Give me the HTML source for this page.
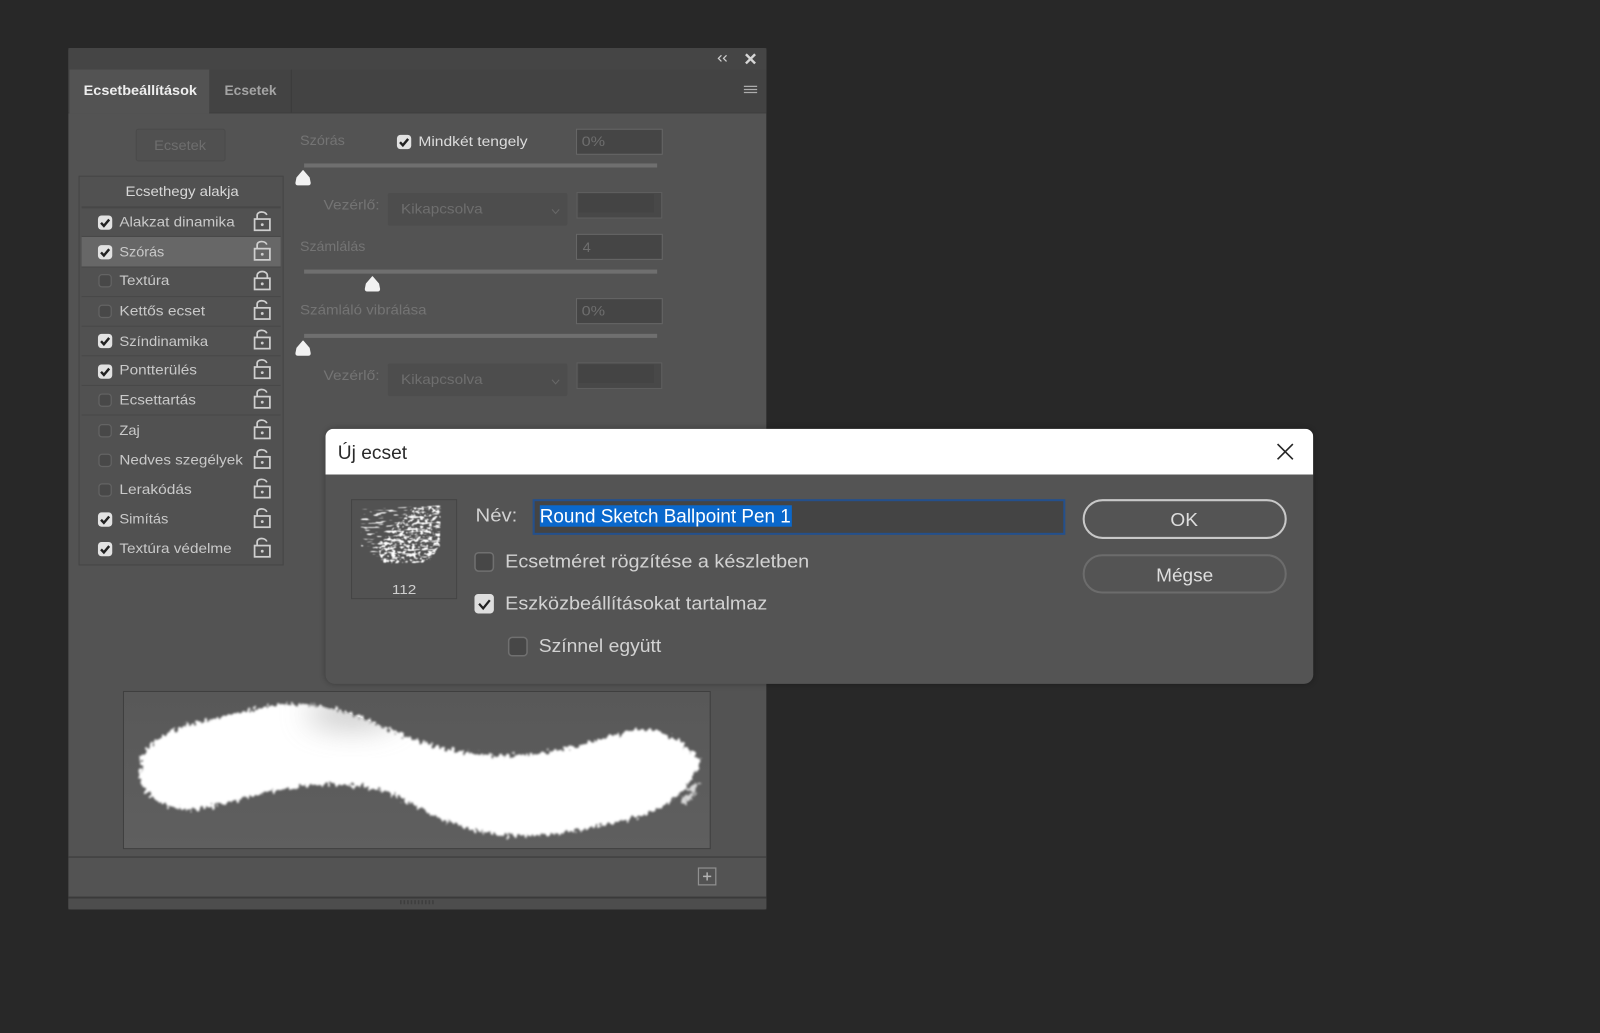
<!DOCTYPE html>
<html lang="hu"><head><meta charset="utf-8"><title>Új ecset</title>
<style>
html,body{margin:0;padding:0;background:#282828;width:1600px;height:1033px;overflow:hidden}
svg{display:block;position:absolute;left:0;top:0;filter:blur(0.35px)}
text{font-family:"Liberation Sans",sans-serif;white-space:pre}
.l{font-size:14px;fill:#c9c9c9}
.d{font-size:14px;fill:#747474}
.f{font-size:14px;fill:#6e6e6e}
.t{font-size:18px;fill:#d2d2d2}
</style></head><body>
<svg width="1600" height="1033" viewBox="0 0 1568 1012" xmlns="http://www.w3.org/2000/svg">
<defs>
<g id="on"><rect x="-7" y="-7" width="14" height="14" rx="3.5" fill="#e2e2e2"/><path d="M-4 0.2 L-1.2 3.2 L4 -3" fill="none" stroke="#222" stroke-width="2.4"/></g>
<g id="off"><rect x="-6" y="-6" width="12" height="12" rx="3" fill="#484848" stroke="#646464" stroke-width="1.2"/></g>
<g id="lock" fill="none" stroke="#cfcfcf" stroke-width="1.7"><rect x="-7.5" y="-2.5" width="15" height="11"/><path d="M-5 -2.5 V-6 C-5 -10.5 3 -10.5 4.5 -6.5"/><circle cx="0" cy="3" r="1.4" fill="#cfcfcf" stroke="none"/></g>
<g id="lockc" fill="none" stroke="#cfcfcf" stroke-width="1.7"><rect x="-7.5" y="-2.5" width="15" height="11"/><path d="M-5 -2.5 V-5 C-5 -10.5 5 -10.5 5 -5 V-2.5"/><circle cx="0" cy="3" r="1.4" fill="#cfcfcf" stroke="none"/></g>
<path id="thumb" d="M0 -7 L6 0 L7 5 Q7 7 5 7 H-5 Q-7 7 -7 5 L-6 0 Z" fill="#f2f2f2" stroke="#f2f2f2" stroke-width="1" stroke-linejoin="round"/>
<path id="strokeShape" d="M138 742 C150 722 172 712 200 706 C235 698 262 689 298 690 C335 691 372 712 410 726 C445 738 480 742 520 739 C560 735 585 725 615 717 C640 710 662 720 686 744 C680 772 655 792 625 800 C585 812 530 822 490 818 C450 813 420 798 395 783 C370 771 345 768 310 769 C270 771 230 786 195 793 C165 795 145 784 138 766 Z"/>
<filter id="rough" x="100" y="660" width="620" height="190" filterUnits="userSpaceOnUse" color-interpolation-filters="sRGB">
<feTurbulence type="fractalNoise" baseFrequency="0.28 0.2" numOctaves="2" seed="7"/>
<feDisplacementMap in="SourceGraphic" scale="11" xChannelSelector="R" yChannelSelector="G"/>
<feGaussianBlur stdDeviation="1"/>
</filter>
<filter id="sp1" x="345" y="490" width="95" height="70" filterUnits="userSpaceOnUse" color-interpolation-filters="sRGB">
<feTurbulence type="fractalNoise" baseFrequency="0.09 0.5" numOctaves="2" seed="11"/>
<feColorMatrix values="0 0 0 0 1 0 0 0 0 1 0 0 0 0 1 10 0 0 0 -5.9"/>
<feComposite in2="SourceGraphic" operator="in"/>
<feGaussianBlur stdDeviation="0.45"/>
</filter>
<filter id="sp2" x="345" y="490" width="95" height="70" filterUnits="userSpaceOnUse" color-interpolation-filters="sRGB">
<feTurbulence type="fractalNoise" baseFrequency="0.25 0.35" numOctaves="2" seed="4"/>
<feColorMatrix values="0 0 0 0 1 0 0 0 0 1 0 0 0 0 1 10 0 0 0 -5.1"/>
<feComposite in2="SourceGraphic" operator="in"/>
<feGaussianBlur stdDeviation="0.4"/>
</filter>
<filter id="bl" x="-50%" y="-100%" width="200%" height="300%"><feGaussianBlur stdDeviation="14"/></filter>
<filter id="sh" x="280" y="390" width="1050" height="320" filterUnits="userSpaceOnUse"><feGaussianBlur stdDeviation="3"/></filter>
<clipPath id="tb"><path d="M319 465 V428 a8 8 0 0 1 8 -8 H1279 a8 8 0 0 1 8 8 V465 Z"/></clipPath>
<clipPath id="sc"><path d="M150 720 C200 700 260 686 298 690 C335 691 372 712 410 726 L440 760 L250 760 Z"/></clipPath>
<linearGradient id="pv" x1="0" y1="0" x2="0" y2="1"><stop offset="0" stop-color="#585858"/><stop offset="1" stop-color="#5f5f5f"/></linearGradient>
</defs>

<rect width="1568" height="1012" fill="#282828"/>

<!-- panel -->
<rect x="67" y="47" width="684" height="844" rx="2" fill="#535353"/>
<rect x="67" y="47" width="684" height="21" fill="#454545"/>
<rect x="67" y="68" width="684" height="42" fill="#434343"/>
<rect x="67" y="110" width="684" height="1" fill="#3d3d3d"/>
<rect x="68" y="68" width="137" height="43" fill="#535353"/>
<rect x="285" y="68" width="1" height="42" fill="#3b3b3b"/>
<text x="82" y="93" font-size="14" font-weight="bold" fill="#eeeeee" textLength="111" lengthAdjust="spacingAndGlyphs">Ecsetbeállítások</text>
<text x="220" y="93" font-size="14" font-weight="bold" fill="#a4a4a4" textLength="51" lengthAdjust="spacingAndGlyphs">Ecsetek</text>
<path d="M707 54 L704 57 L707 60 M712 54 L709 57 L712 60" fill="none" stroke="#cfcfcf" stroke-width="1.2"/>
<path d="M731 53 L740 62 M740 53 L731 62" fill="none" stroke="#d6d6d6" stroke-width="2.4"/>
<path d="M729 84.500 H742 M729 87.500 H742 M729 90.500 H742" fill="none" stroke="#adadad" stroke-width="1.200"/>

<!-- brushes button -->
<rect x="133.500" y="126.500" width="87" height="31" rx="2" fill="#505050" stroke="#4a4a4a"/>
<text x="151" y="147" class="f" textLength="51" lengthAdjust="spacingAndGlyphs">Ecsetek</text>

<!-- right controls -->
<text x="294" y="142" class="d" textLength="44" lengthAdjust="spacingAndGlyphs">Szórás</text>
<use href="#on" x="396" y="139"/>
<text x="410" y="143" font-size="14" fill="#dcdcdc" textLength="107" lengthAdjust="spacingAndGlyphs">Mindkét tengely</text>
<rect x="565" y="126.500" width="84" height="24.500" fill="#454545" stroke="#666"/>
<text x="570" y="143" class="f" textLength="23" lengthAdjust="spacingAndGlyphs">0%</text>
<rect x="298" y="160" width="346" height="4" fill="#6f6f6f"/>
<use href="#thumb" x="297" y="174"/>
<text x="317" y="205" class="d" textLength="55" lengthAdjust="spacingAndGlyphs">Vezérlő:</text>
<rect x="380" y="189" width="176" height="32" rx="2" fill="#4d4d4d"/>
<text x="393" y="209" class="f" textLength="80" lengthAdjust="spacingAndGlyphs">Kikapcsolva</text>
<path d="M541 205 L544.500 209 L548 205" fill="none" stroke="#686868" stroke-width="1"/>
<rect x="565.500" y="188.500" width="83" height="25" fill="#484848" stroke="#5f5f5f"/>
<rect x="567" y="190" width="74" height="18" fill="#444444"/>

<text x="294" y="246" class="d" textLength="64" lengthAdjust="spacingAndGlyphs">Számlálás</text>
<rect x="565" y="229.500" width="84" height="24.500" fill="#454545" stroke="#666"/>
<text x="571" y="247" class="f" textLength="8" lengthAdjust="spacingAndGlyphs">4</text>
<rect x="298" y="264" width="346" height="4" fill="#6f6f6f"/>
<use href="#thumb" x="365" y="278"/>

<text x="294" y="308" class="d" textLength="124" lengthAdjust="spacingAndGlyphs">Számláló vibrálása</text>
<rect x="565" y="292.500" width="84" height="24.500" fill="#454545" stroke="#666"/>
<text x="570" y="309" class="f" textLength="23" lengthAdjust="spacingAndGlyphs">0%</text>
<rect x="298" y="327" width="346" height="4" fill="#6f6f6f"/>
<use href="#thumb" x="297" y="341"/>
<text x="317" y="372" class="d" textLength="55" lengthAdjust="spacingAndGlyphs">Vezérlő:</text>
<rect x="380" y="356" width="176" height="32" rx="2" fill="#4d4d4d"/>
<text x="393" y="376" class="f" textLength="80" lengthAdjust="spacingAndGlyphs">Kikapcsolva</text>
<path d="M541 372 L544.500 376 L548 372" fill="none" stroke="#686868" stroke-width="1"/>
<rect x="565.500" y="355.500" width="83" height="25" fill="#484848" stroke="#5f5f5f"/>
<rect x="567" y="357" width="74" height="18" fill="#444444"/>

<!-- list -->
<rect x="77.500" y="172.500" width="200" height="381" fill="#515151" stroke="#454545"/>
<rect x="80" y="232" width="195" height="29" fill="#676767"/>
<g fill="#474747">
<rect x="80" y="202" width="195" height="2"/>
<rect x="80" y="231" width="195" height="1"/>
<rect x="80" y="261" width="195" height="1"/>
<rect x="80" y="290" width="195" height="1"/>
<rect x="80" y="319" width="195" height="1"/>
<rect x="80" y="348" width="195" height="1"/>
<rect x="80" y="377" width="195" height="1"/>
<rect x="80" y="406" width="195" height="1"/>
</g>
<text x="123" y="192" font-size="14" fill="#d8d8d8" textLength="111" lengthAdjust="spacingAndGlyphs">Ecsethegy alakja</text>

<use href="#on" x="103" y="218"/><text x="117" y="222" class="l" textLength="113" lengthAdjust="spacingAndGlyphs">Alakzat dinamika</text><use href="#lock" x="257" y="217"/>
<use href="#on" x="103" y="247"/><text x="117" y="251" class="l" textLength="44" lengthAdjust="spacingAndGlyphs">Szórás</text><use href="#lock" x="257" y="246"/>
<use href="#off" x="103" y="275"/><text x="117" y="279" class="l" textLength="49" lengthAdjust="spacingAndGlyphs">Textúra</text><use href="#lockc" x="257" y="275"/>
<use href="#off" x="103" y="305"/><text x="117" y="309" class="l" textLength="84" lengthAdjust="spacingAndGlyphs">Kettős ecset</text><use href="#lock" x="257" y="304"/>
<use href="#on" x="103" y="334"/><text x="117" y="339" class="l" textLength="87" lengthAdjust="spacingAndGlyphs">Színdinamika</text><use href="#lock" x="257" y="333"/>
<use href="#on" x="103" y="364"/><text x="117" y="367" class="l" textLength="76" lengthAdjust="spacingAndGlyphs">Pontterülés</text><use href="#lock" x="257" y="362"/>
<use href="#off" x="103" y="392"/><text x="117" y="396" class="l" textLength="75" lengthAdjust="spacingAndGlyphs">Ecsettartás</text><use href="#lock" x="257" y="391"/>
<use href="#off" x="103" y="422"/><text x="117" y="426" class="l" textLength="20" lengthAdjust="spacingAndGlyphs">Zaj</text><use href="#lock" x="257" y="421"/>
<use href="#off" x="103" y="451"/><text x="117" y="455" class="l" textLength="121" lengthAdjust="spacingAndGlyphs">Nedves szegélyek</text><use href="#lock" x="257" y="450"/>
<use href="#off" x="103" y="480"/><text x="117" y="484" class="l" textLength="71" lengthAdjust="spacingAndGlyphs">Lerakódás</text><use href="#lock" x="257" y="479"/>
<use href="#on" x="103" y="509"/><text x="117" y="513" class="l" textLength="48" lengthAdjust="spacingAndGlyphs">Simítás</text><use href="#lock" x="257" y="508"/>
<use href="#on" x="103" y="538"/><text x="117" y="542" class="l" textLength="110" lengthAdjust="spacingAndGlyphs">Textúra védelme</text><use href="#lock" x="257" y="537"/>

<!-- preview -->
<rect x="121" y="677.500" width="575" height="154" fill="url(#pv)" stroke="#3f3f3f"/>
<g filter="url(#rough)">
<use href="#strokeShape" fill="#ffffff"/>
<path d="M672 772 L686 766 L678 780 Z M666 782 L684 776 L672 788 Z" fill="#d8d8d8"/>
</g>
<g clip-path="url(#sc)"><ellipse cx="345" cy="700" rx="45" ry="14" fill="#a6a6a6" opacity=".6" filter="url(#bl)"/></g>

<!-- footer -->
<rect x="67" y="839" width="684" height="1.500" fill="#414141"/>
<rect x="67" y="878.500" width="684" height="2" fill="#3a3a3a"/>
<rect x="67" y="880.500" width="684" height="10.500" fill="#4d4d4d"/>
<rect x="684.500" y="850.500" width="17" height="16.500" fill="none" stroke="#909090" stroke-width="1.200"/>
<path d="M689 858.700 H697 M693 854.700 V862.700" stroke="#b4b4b4" stroke-width="1.400"/>
<path d="M392 884 H426" stroke="#3e3e3e" stroke-width="4" stroke-dasharray="1.500 2"/>

<!-- dialog -->
<rect x="319" y="420" width="968" height="250" rx="9" fill="#000" opacity=".3" filter="url(#sh)"/>
<rect x="319" y="420" width="968" height="250" rx="9" fill="#545454"/>
<g clip-path="url(#tb)"><rect x="319" y="420" width="968" height="45" fill="#ffffff"/></g>
<text x="331" y="449.500" font-size="19" fill="#2a2a2a" textLength="68" lengthAdjust="spacingAndGlyphs">Új ecset</text>
<path d="M1252 435 L1267 450 M1267 435 L1252 450" stroke="#262626" stroke-width="1.600" fill="none"/>

<rect x="344.500" y="489.500" width="103" height="97" fill="#525252" stroke="#444444"/>
<path d="M353 499 L432 495 L431 535 L420 551 L378 552 L354 535 Z" fill="#fff" filter="url(#sp1)"/>
<path d="M405 497 L432 495 L431 535 L420 551 L376 552 L368 535 Z" fill="#fff" filter="url(#sp2)"/>
<text x="384" y="582" font-size="13" fill="#cfcfcf" textLength="24" lengthAdjust="spacingAndGlyphs">112</text>

<text x="466" y="511" class="t" textLength="41" lengthAdjust="spacingAndGlyphs">Név:</text>
<rect x="523" y="490" width="520" height="33" fill="#444444" stroke="#24508c" stroke-width="2"/>
<rect x="529" y="495" width="247" height="21" fill="#0a68cc"/>
<text x="529" y="512" font-size="19" fill="#ffffff" textLength="246" lengthAdjust="spacingAndGlyphs">Round Sketch Ballpoint Pen 1</text>

<rect x="465.500" y="541.500" width="18" height="18" rx="3.500" fill="#474747" stroke="#707070" stroke-width="1.500"/>
<text x="495" y="556" class="t" textLength="298" lengthAdjust="spacingAndGlyphs">Ecsetméret rögzítése a készletben</text>
<rect x="465" y="582" width="19" height="19" rx="3.500" fill="#dedede"/>
<path d="M469.500 591.500 L473.500 596 L480 588" fill="none" stroke="#222" stroke-width="2.200"/>
<text x="495" y="597" class="t" textLength="257" lengthAdjust="spacingAndGlyphs">Eszközbeállításokat tartalmaz</text>
<rect x="498.500" y="624.500" width="18" height="18" rx="3.500" fill="#474747" stroke="#707070" stroke-width="1.500"/>
<text x="528" y="639" class="t" textLength="120" lengthAdjust="spacingAndGlyphs">Színnel együtt</text>

<rect x="1062" y="490" width="198" height="37" rx="18.500" fill="none" stroke="#c8c8c8" stroke-width="2"/>
<text x="1147" y="515.500" font-size="18" fill="#dedede" textLength="27" lengthAdjust="spacingAndGlyphs">OK</text>
<rect x="1062" y="544" width="198" height="36.500" rx="18" fill="none" stroke="#6c6c6c" stroke-width="2"/>
<text x="1133" y="569.500" font-size="18" fill="#dedede" textLength="56" lengthAdjust="spacingAndGlyphs">Mégse</text>
</svg>
</body></html>
